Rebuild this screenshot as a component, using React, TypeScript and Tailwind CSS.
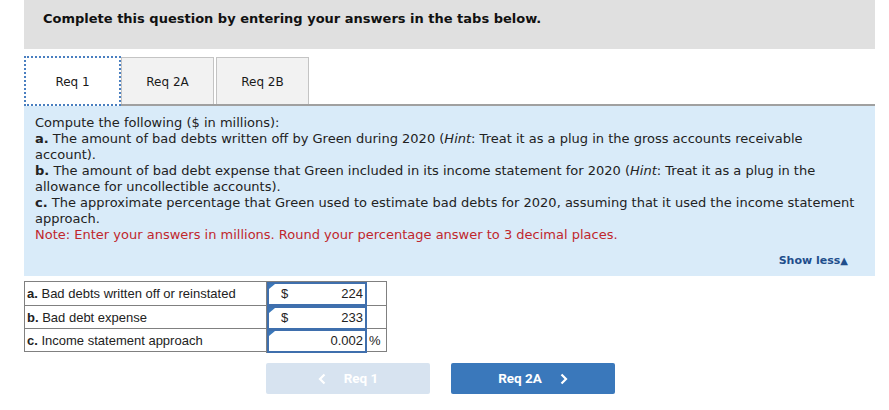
import React from "react";

const Input = ({ prefix, value }: { prefix?: string; value: string }) => (
  <div className="relative flex h-full items-center border-2 border-[#3f6fad] bg-white px-[12px] pr-[2px]">
    <span className="absolute left-0 top-0 h-0 w-0 border-l-[6px] border-b-[5px] border-l-[#3a78bb] border-b-transparent" />
    {prefix && <span>{prefix}</span>}
    <span className="ml-auto">{value}</span>
  </div>
);

export default function App() {
  const verdana = { fontFamily: '"DejaVu Sans", Verdana, sans-serif' };
  return (
    <div className="w-[889px] h-[410px] bg-white text-[#1a1a1a]" style={verdana}>
      <div className="mx-[24px] w-[851px]">
        <div className="h-[49px] bg-[#e0e0e0] pl-[19px] pt-[9px] text-[13px] font-bold text-[#111]">
          Complete this question by entering your answers in the tabs below.
        </div>
        <div className="mt-[9px] flex h-[48px] items-end border-b-2 border-[#a0a0a0]">
          <div className="flex h-[50px] w-[97px] -mb-[2px] items-center justify-center border-2 border-dotted border-[#4a7fc0] bg-white pt-[2px] text-[12px]">
            Req 1
          </div>
          <div className="flex h-[47px] w-[93px] items-center justify-center border border-b-0 border-[#c4c4c4] bg-[#f2f2f2] pt-[2px] text-[12px]">
            Req 2A
          </div>
          <div className="ml-[2px] flex h-[47px] w-[93px] items-center justify-center border border-b-0 border-[#c4c4c4] bg-[#f2f2f2] pt-[2px] text-[12px]">
            Req 2B
          </div>
        </div>
        <div className="h-[170px] bg-[#d9ebf9] pl-[11px] pr-[14px] pt-[9px] text-[13px] leading-[16px] text-[#222]">
          <div>Compute the following ($ in millions):</div>
          <div>
            <b>a.</b> The amount of bad debts written off by Green during 2020 (<i>Hint</i>: Treat it as a plug in the gross accounts receivable account).
          </div>
          <div>
            <b>b.</b> The amount of bad debt expense that Green included in its income statement for 2020 (<i>Hint</i>: Treat it as a plug in the allowance for uncollectible accounts).
          </div>
          <div>
            <b>c.</b> The approximate percentage that Green used to estimate bad debts for 2020, assuming that it used the income statement approach.
          </div>
          <div className="text-[#c0272d]">
            Note: Enter your answers in millions. Round your percentage answer to 3 decimal places.
          </div>
          <div className="mt-[10px] flex justify-end pr-[13px] text-[11px] font-bold text-[#1f4e8c]">
            Show less<span className="text-[10px]">▲</span>
          </div>
        </div>
        <div className="mt-[5px] w-[363px] border border-[#808080] text-[13px] text-[#222]" style={{ fontFamily: '"Liberation Sans", Arial, sans-serif' }}>
          {[
            { l: "a.", t: "Bad debts written off or reinstated", p: "$", v: "224", u: "" },
            { l: "b.", t: "Bad debt expense", p: "$", v: "233", u: "" },
            { l: "c.", t: "Income statement approach", p: "", v: "0.002", u: "%" },
          ].map((r, i) => (
            <div key={i} className={`grid h-[23px] grid-cols-[242px_100px_1fr] ${i > 0 ? "border-t border-[#808080]" : ""}`}>
              <div className="flex items-center border-r border-[#808080] pl-[2px]">
                <span>
                  <b>{r.l}</b> {r.t}
                </span>
              </div>
              <Input prefix={r.p} value={r.v} />
              <div className="flex items-center pl-[2px]">{r.u}</div>
            </div>
          ))}
        </div>
        <div className="mt-[11px] flex gap-[21px] pl-[242px]" style={{ fontFamily: 'Roboto, "Liberation Sans", sans-serif' }}>
          <div className="flex h-[31px] w-[164px] items-center justify-center gap-[18px] rounded-[2px] bg-[#d7e3f0] text-[13.5px] font-bold text-white">
            <svg width="8" height="12" viewBox="0 0 8 12"><path d="M6.5 1.5 2 6l4.5 4.5" stroke="white" strokeWidth="2.2" fill="none" /></svg>
            <span>Req 1</span>
          </div>
          <div className="flex h-[31px] w-[164px] items-center justify-center gap-[18px] rounded-[2px] bg-[#3a78bb] text-[13.5px] font-bold text-white">
            <span>Req 2A</span>
            <svg width="8" height="12" viewBox="0 0 8 12"><path d="M1.5 1.5 6 6l-4.5 4.5" stroke="white" strokeWidth="2.2" fill="none" /></svg>
          </div>
        </div>
      </div>
    </div>
  );
}
